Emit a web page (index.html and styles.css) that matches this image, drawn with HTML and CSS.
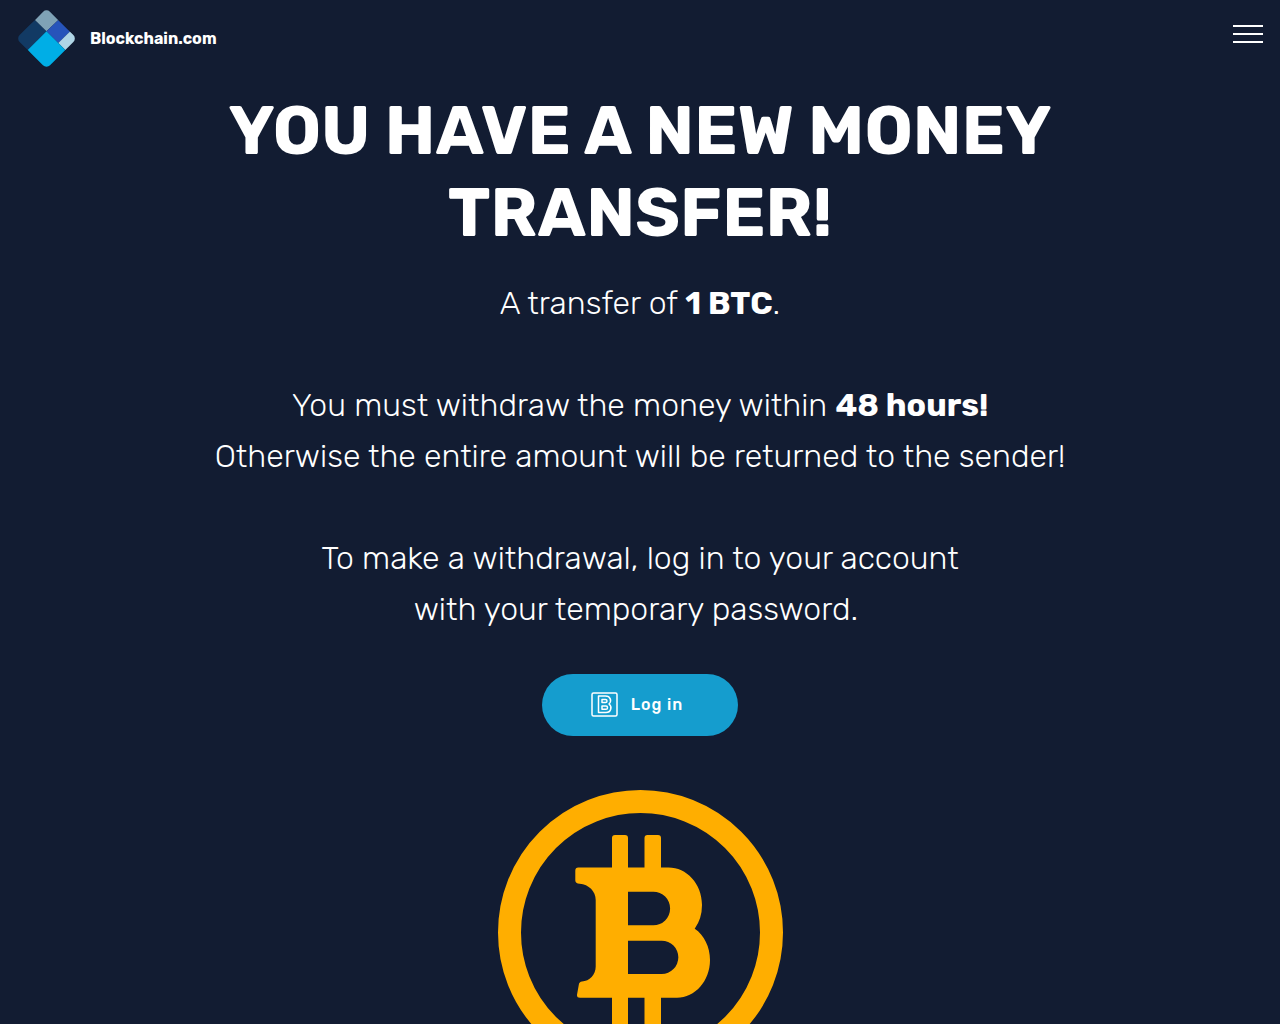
FILE: index.html
```html
<!DOCTYPE html>
<html lang="en">
<head>
    <meta charset="UTF-8">
    <meta name="viewport" content="width=device-width, initial-scale=1.0">
    <title>Landing page mockup</title>
    <link rel="stylesheet" href="styles.css">
</head>
<body>
    <header class="navbar">
        <div class="brand">
            <svg class="brand-logo" viewBox="0 0 58 58" aria-hidden="true">
                <defs>
                    <clipPath id="diamond">
                        <rect x="7" y="7" width="43" height="43" rx="5" transform="rotate(45 28.5 28.5)"/>
                    </clipPath>
                </defs>
                <g clip-path="url(#diamond)">
                    <path fill="#123a64" d="M17 10L28.5 21.3 9.7 40-5 28.5z"/>
                    <path fill="#7fa2b6" d="M17 10L28.5-2 40.3 10 28.5 21.3z"/>
                    <path fill="#2754ba" d="M40.3 10L52 21.5 40.3 33 28.5 21.3z"/>
                    <path fill="#b0d5e6" d="M52 21.5L62 30 47.6 40.3 40.3 33z"/>
                    <path fill="#00aee6" d="M28.5 21.3L47.6 40.3 28.5 62 9.7 40z"/>
                </g>
            </svg>
            <span class="brand-name">Blockchain.com</span>
        </div>
        <button class="menu-btn" type="button" aria-label="Menu">
            <span></span>
            <span></span>
            <span></span>
        </button>
    </header>

    <main class="content">
        <h1>YOU HAVE A NEW MONEY TRANSFER!</h1>
        <div class="message">
            <p>A transfer of <strong>1 BTC</strong>.</p>
            <p>You must withdraw the money within <strong>48 hours!</strong><br>Otherwise the entire amount will be returned to the sender!</p>
            <p>To make a withdrawal, log in to your account<br>with your temporary password.&nbsp;</p>
        </div>

        <button class="login-btn" type="button">
            <svg class="login-icon" viewBox="0 0 27 25" aria-hidden="true">
                <g fill="none" stroke="currentColor" stroke-width="1.5" stroke-linejoin="round">
                    <rect x="1" y="1" width="25" height="23" rx="1.5"/>
                    <path d="M7.500 4h7c5 0 6.500 5 3.500 8 3.500 2.500 2 8.500-3 8.500h-7.500z"/>
                    <path d="M11 7.500h3.500c2 0 2 3 0 3h-3.500zM11 14h4c2 0 2 3.300 0 3.300h-4z"/>
                </g>
            </svg>
            Log in
        </button>

        <svg class="coin" viewBox="0 0 285 285" aria-hidden="true">
            <circle cx="142.5" cy="142.5" r="131" fill="none" stroke="#ffae00" stroke-width="23"/>
            <path fill="#ffae00" fill-rule="evenodd" d="M114 77.500V48q0-3 3-3h10q3 0 3 3v29.500h16.500V48q0-3 3-3h10.500q3 0 3 3v29.500h7.500
                c18 0 33.500 16 33.500 37.500q0 13.500-7.300 23.700c9.500 6.300 15.300 18.300 15.300 31.300 0 21-15 37.700-33 37.700h-16V237q0 3-3 3h-10.500q-3 0-3-3v-29.300H130V237q0 3-3 3h-10q-3 0-3-3v-29.300H82
                q-3.300 0-3-3l1.800-10q.5-3 3.200-3.200c7.500-.5 13.700-6.500 13.700-15V110c0-9-7-15.500-16-16.300q-4.400-.2-4.400-3.200V80.500q0-3 3-3z
                M130 101.700v33.600h25.300a16.800 16.800 0 0 0 0-33.600zM130 150.700V184h33.700a16.600 16.600 0 0 0 0-33.300z"/>
        </svg>
    </main>
</body>
</html>
```
FILE: styles.css
```css
* {
    margin: 0;
    padding: 0;
    box-sizing: border-box;
}

body {
    font-family: Rubik, Roboto, sans-serif;
    background-color: #121c32;
    color: #fff;
}

.navbar {
    display: flex;
    justify-content: space-between;
    align-items: flex-start;
    padding: 10px 17px 0 18px;
}

.brand {
    display: flex;
    align-items: center;
    gap: 14px;
}

.brand-logo {
    width: 58px;
    height: 58px;
}

.brand-name {
    font-size: 16px;
    font-weight: 700;
    line-height: 20px;
}

.menu-btn {
    display: flex;
    flex-direction: column;
    gap: 6px;
    width: 30px;
    margin-top: 15px;
    background: none;
    border: none;
    cursor: pointer;
}

.menu-btn span {
    width: 100%;
    height: 2px;
    background-color: #fff;
}

.content {
    display: flex;
    flex-direction: column;
    align-items: center;
    max-width: 980px;
    margin: 0 auto;
    padding: 22px 16px 64px;
    text-align: center;
}

h1 {
    font-size: 68px;
    font-weight: 700;
    line-height: 82px;
    margin-bottom: 24px;
}

.message {
    display: flex;
    flex-direction: column;
    gap: 51px;
    font-size: 32px;
    font-weight: 300;
    line-height: 51px;
    margin-bottom: 39px;
}

.message strong {
    font-weight: 700;
}

.login-btn {
    display: flex;
    align-items: center;
    gap: 13px;
    padding: 18px 55px 19px 49px;
    border: none;
    border-radius: 32px;
    background-color: #159dce;
    color: #fff;
    font-family: inherit;
    font-size: 16px;
    font-weight: 500;
    letter-spacing: 1px;
    cursor: pointer;
    margin-bottom: 54px;
}

.login-icon {
    width: 27px;
    height: 25px;
}

.coin {
    width: 285px;
    height: 285px;
}
```
